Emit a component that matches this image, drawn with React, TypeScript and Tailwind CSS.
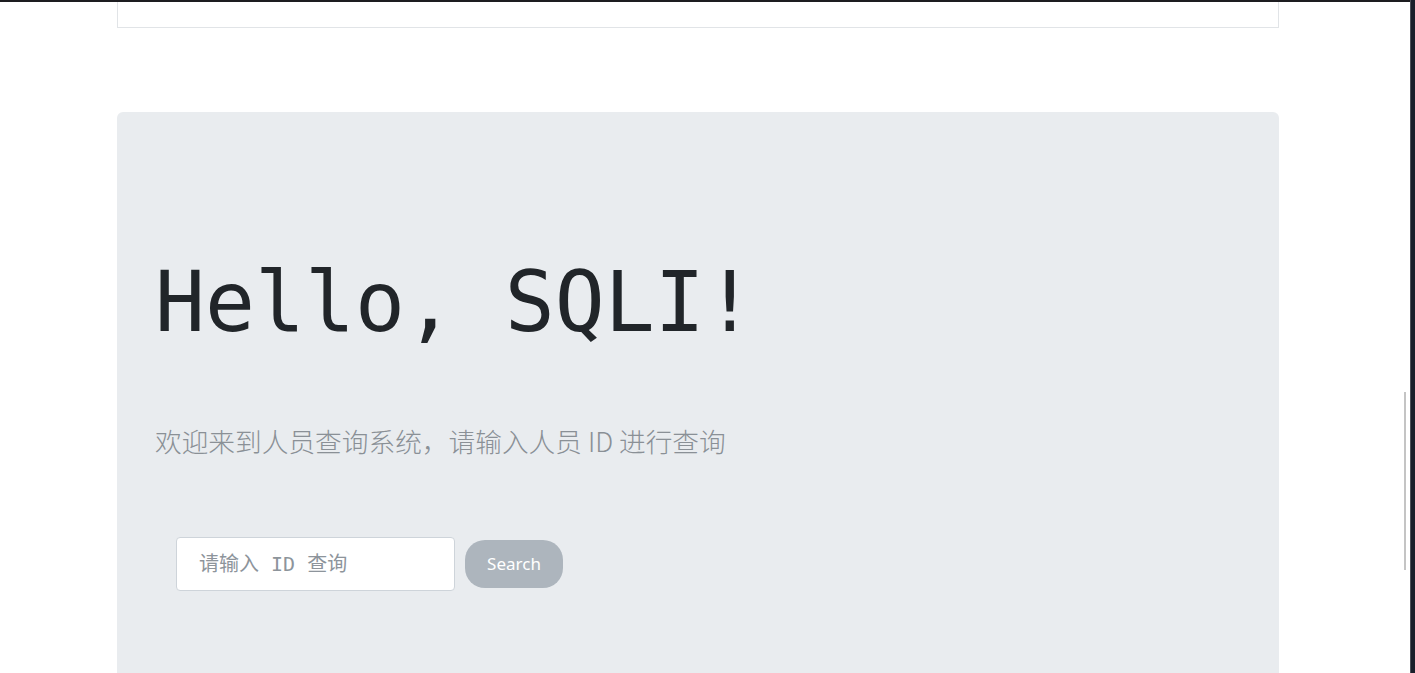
import React from 'react';

export default function App() {
  return (
    <div className="relative h-[673px] w-full overflow-hidden bg-white">
      {/* window chrome */}
      <div className="h-[2px] bg-[#1d1d20]" />
      <div className="absolute right-0 top-0 h-full w-[5px] border-l border-l-[#4b5058] bg-[#19202b]" />
      <div className="absolute left-[1404px] top-[392px] h-[178px] w-[2px] bg-[#c4c4c4]" />

      <div className="ml-[117px] w-[1162px]">
        {/* tail of previous card */}
        <div className="h-[26px] border border-t-0 border-[#e1e4e7]" />

        {/* jumbotron */}
        <div className="mt-[84px] h-[600px] rounded-[6px] bg-[#e9ecef] pl-[38px] pt-[141px]">
          <h1 className="text-[83px] leading-[1.2] text-[#212529] font-['DejaVu_Sans_Mono',monospace]">
            Hello, SQLI!
          </h1>
          <p className="mt-[68px] text-[26.7px] leading-[1.5] font-light text-[#8a9096] font-['Noto_Sans_CJK_SC',sans-serif]">
            欢迎来到人员查询系统，请输入人员 ID 进行查询
          </p>

          <form className="ml-[21px] mt-[76px] flex items-center" onSubmit={e => e.preventDefault()}>
            <input
              type="text"
              placeholder="请输入 ID 查询"
              className="h-[54px] w-[279px] rounded-[4px] border border-[#ced4da] bg-white pl-[22px] text-[20px] text-[#495057] outline-none placeholder:text-[#8d949b] font-['DejaVu_Sans_Mono','Noto_Sans_CJK_SC',monospace]"
            />
            <button
              type="submit"
              className="ml-[10px] h-[48px] w-[98px] rounded-[20px] bg-[#adb5bd] text-[17px] text-white font-['Noto_Sans','Open_Sans',sans-serif]"
            >
              Search
            </button>
          </form>
        </div>
      </div>
    </div>
  );
}
